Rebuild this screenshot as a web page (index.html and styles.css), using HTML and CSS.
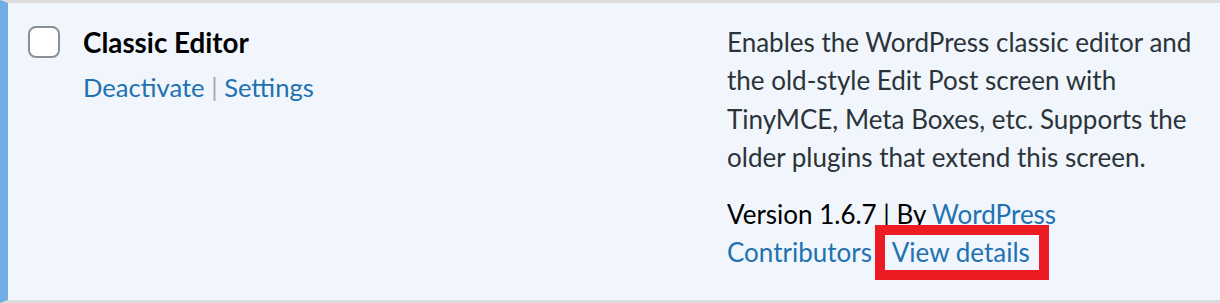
FILE: index.html
```html
<!DOCTYPE html>
<html lang="en">
<head>
<meta charset="utf-8">
<title>Plugins</title>
<link rel="stylesheet" href="styles.css">
</head>
<body>
<div class="plugin-row">
  <div class="check-col"><span class="checkbox"></span></div>
  <div class="title-col">
    <strong class="plugin-name">Classic Editor</strong>
    <div class="row-actions"><a href="#">Deactivate</a><span class="sep"> | </span><a href="#">Settings</a></div>
  </div>
  <div class="desc-col">
    <p class="desc">Enables the WordPress classic editor and the old-style Edit Post screen with TinyMCE, Meta Boxes, etc. Supports the older plugins that extend this screen.</p>
    <div class="meta">Version 1.6.7 | By <a href="#">WordPress Contributors</a> | <a href="#" class="highlight">View details</a></div>
  </div>
</div>
</body>
</html>
```
FILE: styles.css
```css
html, body {
  margin: 0;
  padding: 0;
  background: #f0f6fc;
}
body {
  font-family: "Segoe UI", Lato, "Liberation Sans", sans-serif;
  font-size: 25.6px;
  line-height: 1.5;
  color: #2c3338;
}
a {
  color: #2271b1;
  text-decoration: none;
}
.plugin-row {
  display: grid;
  grid-template-columns: 75px 644px 1fr;
  height: 297px;
  border-left: 8px solid #72aee6;
  border-top: 3px solid #dcdcde;
  border-bottom: 3px solid #dcdcde;
  background: #f0f6fc;
}
.check-col {
  padding: 23px 0 0 20px;
}
.checkbox {
  display: block;
  width: 28px;
  height: 28px;
  border: 2px solid #8c8f94;
  border-radius: 8px;
  background: #fff;
}
.title-col {
  padding-top: 21px;
}
.plugin-name {
  display: block;
  font-size: 27.8px;
  font-weight: 700;
  color: #000;
  line-height: 1.4;
}
.row-actions {
  margin-top: 5px;
}
.sep {
  color: #a7aaad;
}
.desc-col {
  padding-top: 20px;
  max-width: 468px;
  font-size: 26px;
  line-height: 38.4px;
}
.desc {
  margin: 0 0 18px;
}
.meta {
  color: #000;
}
.highlight {
  display: inline-block;
  position: relative;
}
.highlight::after {
  content: "";
  position: absolute;
  left: -17px;
  right: -19px;
  top: -8px;
  bottom: -9px;
  border: 10px solid #ed1c24;
}
```
